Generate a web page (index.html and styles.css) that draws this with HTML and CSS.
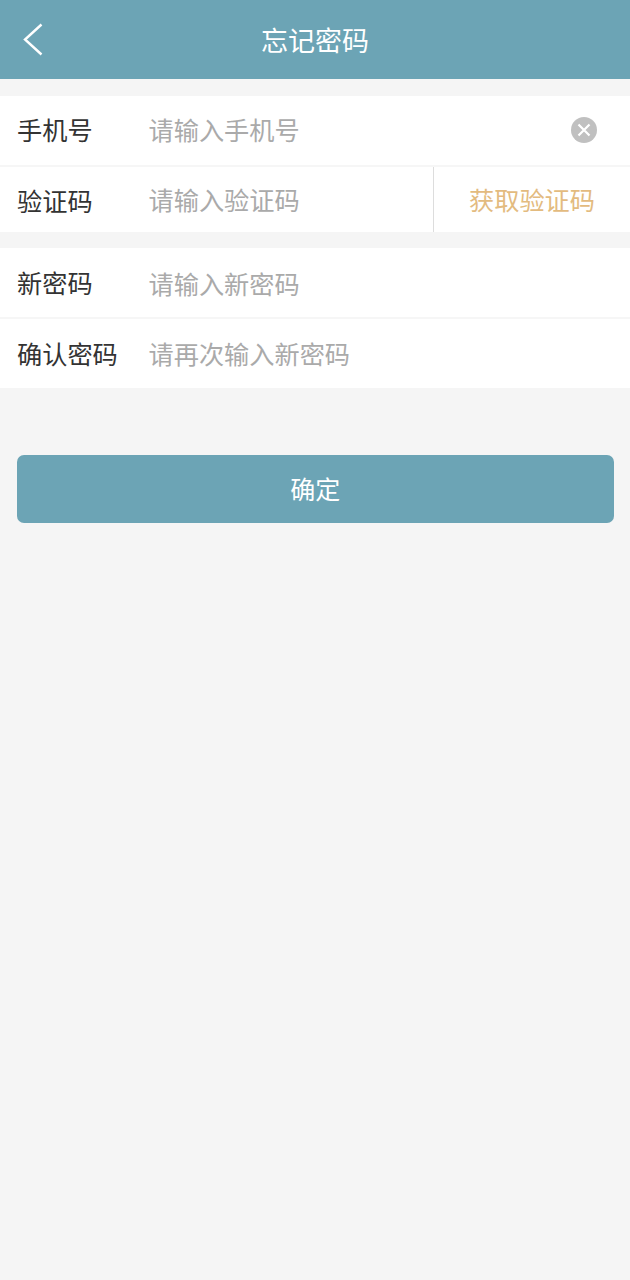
FILE: index.html
```html
<!DOCTYPE html>
<html lang="zh-CN">
<head>
<meta charset="UTF-8">
<meta name="viewport" content="width=device-width, initial-scale=1.0">
<title>忘记密码</title>
<link rel="stylesheet" href="styles.css">
</head>
<body>
<div class="header">
  <svg class="back" width="22" height="34" viewBox="0 0 22 34">
    <path d="M19.5 2.5 L3 17.5 L19.5 32.5" fill="none" stroke="#fff" stroke-width="2.4"/>
  </svg>
  <div class="title">忘记密码</div>
</div>

<div class="group">
  <div class="row row-first row-phone">
    <div class="label">手机号</div>
    <div class="hint">请输入手机号</div>
    <svg class="clear" width="26" height="26" viewBox="0 0 26 26">
      <circle cx="13" cy="13" r="13" fill="#c0c0c0"/>
      <path d="M7.5 7.5 L18.5 18.5 M18.5 7.5 L7.5 18.5" stroke="#fff" stroke-width="2.2"/>
    </svg>
  </div>
  <div class="row row-code">
    <div class="label">验证码</div>
    <div class="hint">请输入验证码</div>
    <div class="get-code">获取验证码</div>
  </div>
</div>

<div class="group">
  <div class="row row-first row-new">
    <div class="label">新密码</div>
    <div class="hint">请输入新密码</div>
  </div>
  <div class="row row-last">
    <div class="label">确认密码</div>
    <div class="hint">请再次输入新密码</div>
  </div>
</div>

<div class="submit">确定</div>
</body>
</html>
```

FILE: styles.css
```css
* {
  margin: 0;
  padding: 0;
  box-sizing: border-box;
}

body {
  width: 630px;
  height: 1280px;
  background: #f5f5f5;
  font-family: "Noto Sans CJK SC", "Noto Sans", sans-serif;
  overflow: hidden;
}

/* Header */
.header {
  position: relative;
  height: 79px;
  background: #6ca4b5;
  display: flex;
  align-items: center;
  justify-content: center;
}

.back {
  position: absolute;
  left: 22px;
  top: 22px;
}

.title {
  color: #fff;
  font-size: 27px;
}

/* Form rows */
.group {
  margin-top: 17px;
  background: #fff;
}

.group + .group {
  margin-top: 16px;
}

.row {
  display: flex;
  align-items: center;
  padding-left: 17px;
  font-size: 25.2px;
}

.row-first {
  height: 71px;
  border-bottom: 2px solid #f6f6f6;
}

.row-code {
  height: 65px;
}

.row-last {
  height: 69px;
}

.label {
  width: 131.5px;
  padding-bottom: 2px;
  color: #333;
  flex-shrink: 0;
}

.hint {
  flex: 1;
  padding-bottom: 2px;
  color: #aaa;
}

/* Small baseline differences between rows */
.row-phone .label,
.row-phone .hint {
  padding-bottom: 4px;
}

.row-code .label {
  padding-bottom: 0;
}

.row-new .hint {
  padding-bottom: 0;
}

.clear {
  margin-right: 33px;
  margin-bottom: 1px;
}

.get-code {
  width: 197px;
  height: 100%;
  border-left: 1px solid #ddd;
  padding: 0 0 2px 35px;
  display: flex;
  align-items: center;
  color: #e3bb7f;
}

/* Confirm button */
.submit {
  margin: 67px 16px 0 16.5px;
  height: 68px;
  background: #6ca4b5;
  border-radius: 7px;
  display: flex;
  align-items: center;
  justify-content: center;
  padding-bottom: 2px;
  color: #fff;
  font-size: 25px;
}
```
